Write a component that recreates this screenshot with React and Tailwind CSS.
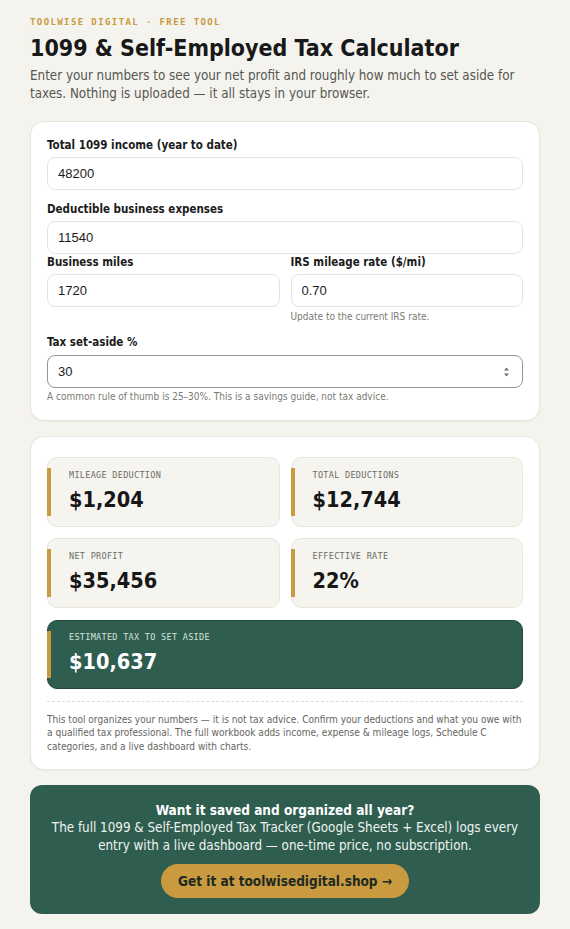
import { useState } from "react";

const sans = "font-[family-name:'DejaVu_Sans_Condensed','DejaVu_Sans',sans-serif]";
const mono = "font-[family-name:'DejaVu_Sans_Mono',monospace]";
const field =
  "block w-full h-[33px] rounded-[8px] border border-[#e6e3d9] bg-white px-2.5 font-[family-name:'Liberation_Sans',Arial,sans-serif] text-[13px] text-[#1b1b1b] outline-none";

function Stat({ label, value, dark }) {
  return (
    <div
      className={
        dark
          ? "relative rounded-[10px] border border-[#21473b] bg-[#2f5e50] pt-[11px] pb-[13px] pl-[21px]"
          : "relative rounded-[10px] border border-[#e8e5dc] bg-[#f5f4ef] pt-3 pb-[13px] pl-[21px]"
      }
    >
      <span className="absolute -left-px top-[10px] bottom-[10px] w-[4px] bg-[#c99a3f]" />
      <div
        className={`${mono} text-[8.5px] leading-[10px] tracking-[0.3px] uppercase ${
          dark ? "text-[#d5e3d9]" : "text-[#6d6c66]"
        }`}
      >
        {label}
      </div>
      <div
        className={`mt-[7px] text-[21.5px] font-bold leading-[26px] ${
          dark ? "text-white" : "text-[#171717]"
        }`}
      >
        {value}
      </div>
    </div>
  );
}

export default function App() {
  const [income, setIncome] = useState("48200");
  const [expenses, setExpenses] = useState("11540");
  const [miles, setMiles] = useState("1720");
  const [rate, setRate] = useState("0.70");
  const [pct, setPct] = useState("30");

  const mileage = Math.round((parseFloat(miles) || 0) * (parseFloat(rate) || 0));
  const deductions = mileage + (parseFloat(expenses) || 0);
  const profit = Math.max(0, (parseFloat(income) || 0) - deductions);
  const tax = Math.round(profit * ((parseFloat(pct) || 0) / 100));
  const effective = income > 0 ? Math.round((tax / parseFloat(income)) * 100) : 0;
  const money = (n) => "$" + Math.round(n).toLocaleString("en-US");

  return (
    <div className={`min-h-screen bg-[#f4f3ee] ${sans} text-[#1a1a1a]`}>
      <div className="px-[30px] pt-4 pb-4">
        <div className={`${mono} text-[9px] font-bold leading-[12px] tracking-[1.4px] text-[#c89a3e]`}>
          TOOLWISE DIGITAL · FREE TOOL
        </div>
        <h1 className="mt-[6px] text-[23px] font-bold leading-[28px] text-[#181818]">
          1099 &amp; Self-Employed Tax Calculator
        </h1>
        <p className="mt-[5px] text-[13.3px] leading-[18px] text-[#575752]">
          Enter your numbers to see your net profit and roughly how much to set aside for taxes. Nothing
          is uploaded — it all stays in your browser.
        </p>

        {/* inputs */}
        <div className="mt-[18px] rounded-[14px] border border-[#e8e5dc] bg-white px-4 pt-4 pb-[17px] shadow-[0_1px_2px_rgba(0,0,0,0.04)]">
          <label className="block text-[11.5px] font-bold leading-[14px] text-[#1b1b1b]">
            Total 1099 income (year to date)
          </label>
          <input className={`mt-[5px] ${field}`} value={income} onChange={(e) => setIncome(e.target.value)} />

          <label className="mt-3 block text-[11.5px] font-bold leading-[14px] text-[#1b1b1b]">
            Deductible business expenses
          </label>
          <input className={`mt-[5px] ${field}`} value={expenses} onChange={(e) => setExpenses(e.target.value)} />

          <div className="mt-px grid grid-cols-2 items-start gap-[11px]">
            <div>
              <label className="block text-[11.5px] font-bold leading-[14px] text-[#1b1b1b]">Business miles</label>
              <input className={`mt-[5px] ${field}`} value={miles} onChange={(e) => setMiles(e.target.value)} />
            </div>
            <div>
              <label className="block text-[11.5px] font-bold leading-[14px] text-[#1b1b1b]">
                IRS mileage rate ($/mi)
              </label>
              <input className={`mt-[5px] ${field}`} value={rate} onChange={(e) => setRate(e.target.value)} />
              <p className="mt-1 text-[10px] leading-[12px] text-[#7a7a74]">Update to the current IRS rate.</p>
            </div>
          </div>

          <label className="mt-3 block text-[11.5px] font-bold leading-[14px] text-[#1b1b1b]">Tax set-aside %</label>
          <div className="relative mt-[6px]">
            <input
              className="block w-full h-[33px] rounded-[8px] border border-[#8d9794] bg-white px-2.5 font-[family-name:'Liberation_Sans',Arial,sans-serif] text-[13px] text-[#1b1b1b] outline-none"
              value={pct}
              onChange={(e) => setPct(e.target.value)}
            />
            <svg
              className="pointer-events-none absolute right-[13px] top-1/2 -translate-y-1/2"
              width="7"
              height="11"
              viewBox="0 0 7 11"
            >
              <path d="M3.5 1 L6 4 H1 Z" fill="#6f6f6f" />
              <path d="M3.5 10 L6 7 H1 Z" fill="#6f6f6f" />
            </svg>
          </div>
          <p className="mt-[3px] text-[10px] leading-[12px] text-[#7a7a74]">
            A common rule of thumb is 25–30%. This is a savings guide, not tax advice.
          </p>
        </div>

        {/* results */}
        <div className="mt-[15px] rounded-[14px] border border-[#e8e5dc] bg-white px-4 pt-5 pb-4 shadow-[0_1px_2px_rgba(0,0,0,0.04)]">
          <div className="grid grid-cols-2 gap-[11px]">
            <Stat label="Mileage deduction" value={money(mileage)} />
            <Stat label="Total deductions" value={money(deductions)} />
            <Stat label="Net profit" value={money(profit)} />
            <Stat label="Effective rate" value={effective + "%"} />
          </div>
          <div className="mt-3">
            <Stat dark label="Estimated tax to set aside" value={money(tax)} />
          </div>
          <div className="mt-3 border-t border-dashed border-[#dedbd2] pt-[11px] text-[10.05px] leading-[13.3px] text-[#66665f]">
            This tool organizes your numbers — it is not tax advice. Confirm your deductions and what you owe
            with a qualified tax professional. The full workbook adds income, expense &amp; mileage logs,
            Schedule C categories, and a live dashboard with charts.
          </div>
        </div>

        {/* cta */}
        <div className="mt-[15px] flex flex-col items-center rounded-[12px] bg-[#2f5e50] px-4 pt-4 pb-4 text-center text-white">
          <div className="text-[13.5px] font-bold leading-[18px]">Want it saved and organized all year?</div>
          <p className="text-[13.3px] leading-[18px] text-[#eef3ef]">
            The full 1099 &amp; Self-Employed Tax Tracker (Google Sheets + Excel) logs every entry with a live
            dashboard — one-time price, no subscription.
          </p>
          <a
            href="#"
            className="mt-[9px] inline-block rounded-full bg-[#c99a3f] px-[17px] py-2 text-[13.5px] font-bold leading-[18px] text-[#1d2923]"
          >
            Get it at toolwisedigital.shop →
          </a>
        </div>
      </div>
    </div>
  );
}
